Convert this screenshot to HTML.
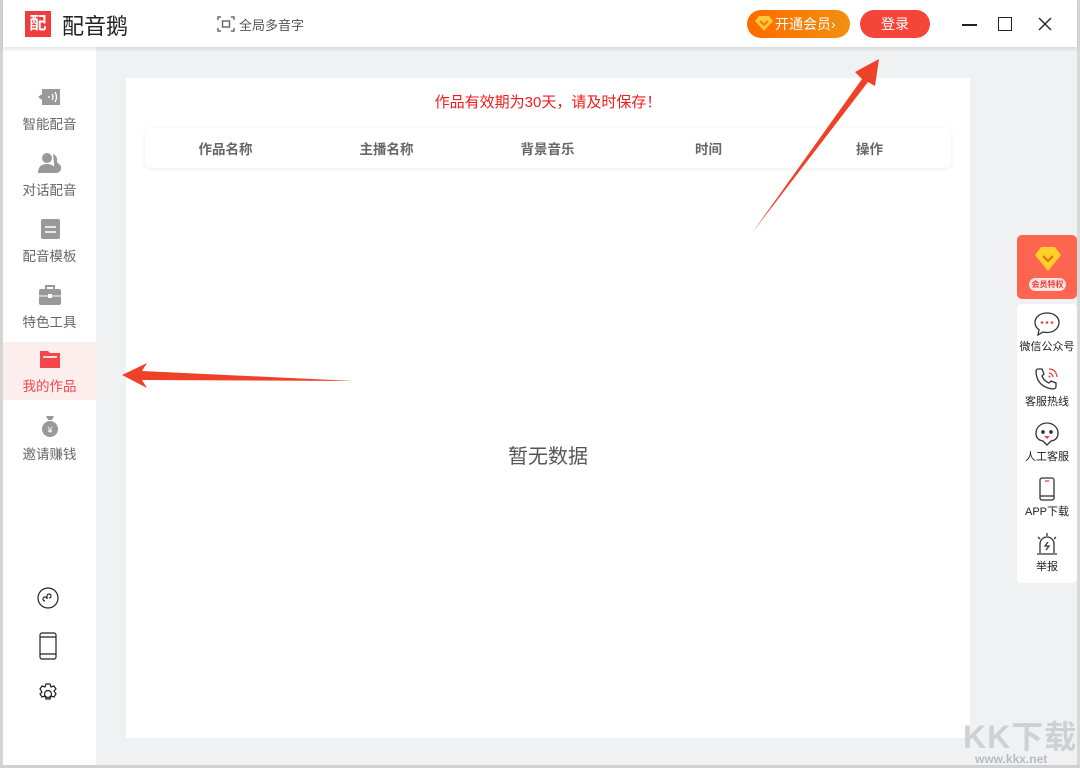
<!DOCTYPE html>
<html><head><meta charset="utf-8"><style>
*{margin:0;padding:0;box-sizing:border-box}
body{width:1080px;height:768px;overflow:hidden;background:#f0f1f3;font-family:"Liberation Sans","Noto Sans CJK SC",sans-serif;position:relative}
.abs{position:absolute}
.lb{left:0;top:0;width:3px;height:768px;background:#d4d4d4}
.rb{left:1077px;top:0;width:3px;height:768px;background:#d8d8d8}
.bb{left:0;top:765px;width:1080px;height:3px;background:#d0d0d0}
.title{left:3px;top:0;width:1074px;height:47px;background:#fff;box-shadow:0 2px 4px rgba(0,0,0,.12);z-index:2}
.side{left:3px;top:47px;width:93px;height:718px;background:#fff}
.nav{position:absolute;left:0;width:93px;height:58px;text-align:center;font-size:13.5px;color:#666}
.nav svg{display:block;margin:0 auto 6px}
.panel{left:126px;top:78px;width:844px;height:660px;background:#fff}
.th{position:absolute;left:19px;top:50px;width:806px;height:40px;border-radius:6px;box-shadow:0 1px 5px rgba(0,0,0,.08);background:#fff;font-size:13.5px;font-weight:bold;color:#666}
.th span{position:absolute;top:10px;width:161px;text-align:center}
.rp{left:1017px;top:304px;width:60px;height:279px;background:#fff;border-radius:5px}
.ri{position:absolute;left:0;width:60px;text-align:center;font-size:11px;color:#222}
.ri svg{display:block;margin:0 auto 2px}
</style></head><body>
<div class="abs lb"></div><div class="abs rb"></div><div class="abs bb"></div>
<div class="abs title">
 <div class="abs" style="left:22px;top:11px;width:26px;height:26px;background:#ef3d3d;color:#fff;font-size:17px;font-weight:bold;text-align:center;line-height:26px">配</div>
 <div class="abs" style="left:59px;top:9px;font-size:22px;color:#222">配音鹅</div>
 <svg class="abs" style="left:214px;top:15px" width="18" height="18" viewBox="0 0 18 18" fill="none" stroke="#666" stroke-width="1.4"><path d="M1 5V2h3M14 2h3v3M17 13v3h-3M4 16H1v-3"/><rect x="5.5" y="6" width="7" height="6"/></svg>
 <div class="abs" style="left:236px;top:15px;font-size:13px;color:#555">全局多音字</div>
 <div class="abs" style="left:744px;top:10px;width:103px;height:28px;border-radius:14px;background:linear-gradient(90deg,#ff6a00,#f09010);color:#fff;font-size:14px;line-height:28px;padding-left:28px">开通会员›</div>
 <svg class="abs" style="left:752px;top:15px" width="18" height="17" viewBox="0 0 18 17"><path d="M4 1h10l4 5-9 10L0 6z" fill="#ffc83a"/><path d="M5 6l4 4 4-4" stroke="#ff7a00" stroke-width="2" fill="none"/></svg>
 <div class="abs" style="left:857px;top:10px;width:70px;height:28px;border-radius:14px;background:#f5453b;color:#fff;font-size:14px;line-height:28px;text-align:center">登录</div>
 <div class="abs" style="left:959px;top:24px;width:15px;height:1.5px;background:#222"></div>
 <div class="abs" style="left:995px;top:17px;width:14px;height:14px;border:1.5px solid #222"></div>
 <svg class="abs" style="left:1035px;top:17px" width="14" height="14"><path d="M1 1l12 12M13 1L1 13" stroke="#222" stroke-width="1.4"/></svg>
</div>
<div class="abs side">
 <div class="nav" style="top:40px"><svg width="24" height="20" viewBox="0 0 24 20"><path d="M4 2h18v16H4V13L0 10l4-3z" fill="#999"/><path d="M10 10h2M14 7q2 3 0 6M17 5q3 5 0 10" stroke="#fff" stroke-width="1.3" fill="none"/></svg>智能配音</div>
 <div class="nav" style="top:106px"><svg width="24" height="20" viewBox="0 0 24 20"><circle cx="9" cy="5" r="5" fill="#999"/><path d="M0 20q0-9 9-9t9 9z" fill="#999"/><path d="M15 1q5 2 4 8l4 4q1 7-6 7z" fill="#999"/></svg>对话配音</div>
 <div class="nav" style="top:172px"><svg width="24" height="20" viewBox="0 0 24 20"><rect x="3" y="0" width="19" height="20" rx="2" fill="#999"/><path d="M7 8h11M7 13h11" stroke="#fff" stroke-width="1.4"/></svg>配音模板</div>
 <div class="nav" style="top:238px"><svg width="24" height="20" viewBox="0 0 24 20"><path d="M8 4V1h8v3" stroke="#999" stroke-width="2" fill="none"/><rect x="1" y="4" width="22" height="16" rx="2" fill="#999"/><path d="M1 11h22" stroke="#fff"/><rect x="10" y="9" width="4" height="4" fill="#fff"/></svg>特色工具</div>
 <div class="nav" style="top:295px;height:58px;background:#fdeeee;color:#f5454b;padding-top:7px"><svg width="24" height="20" viewBox="0 0 24 20"><path d="M2 2h8l2 2h10v15H2z" fill="#f5454b"/><path d="M5 8h14" stroke="#fff" stroke-width="1.6"/></svg>我的作品</div>
 <div class="nav" style="top:368px"><svg width="24" height="22" viewBox="0 0 24 22"><path d="M8 1h8l-2 4h-4z" fill="#999"/><circle cx="12" cy="14" r="8" fill="#999"/><text x="12" y="18" font-size="9" fill="#fff" text-anchor="middle">¥</text></svg>邀请赚钱</div>
 <svg class="abs" style="left:34px;top:540px" width="22" height="22" viewBox="0 0 22 22" fill="none" stroke="#222" stroke-width="1.2"><circle cx="11" cy="11" r="10"/><path d="M8 14a2 2 0 1 1 2-2v-3a2 2 0 1 1 2 2"/></svg>
 <svg class="abs" style="left:36px;top:585px" width="18" height="28" viewBox="0 0 18 28" fill="none" stroke="#222" stroke-width="1.2"><rect x="1" y="1" width="16" height="26" rx="2"/><path d="M1 5h16M1 22h16"/></svg>
 <svg class="abs" style="left:33px;top:635px" width="24" height="24" viewBox="0 0 24 24" fill="none" stroke="#222" stroke-width="1.2"><path d="M10 2h4l1 3 3-1 2 3-2 2 2 3-2 3-3-1-1 3h-4l-1-3-3 1-2-3 2-2-2-3 2-3 3 1z"/><circle cx="12" cy="12" r="3.5"/></svg>
</div>
<div class="abs panel">
 <div class="abs" style="left:0;width:844px;top:13px;text-align:center;font-size:15px;color:#f21a1a">作品有效期为30天，请及时保存！</div>
 <div class="th"><span style="left:0">作品名称</span><span style="left:161px">主播名称</span><span style="left:322px">背景音乐</span><span style="left:483px">时间</span><span style="left:644px">操作</span></div>
 <div class="abs" style="left:0;width:844px;top:362px;text-align:center;font-size:20px;color:#555">暂无数据</div>
</div>
<div class="abs" style="left:1017px;top:235px;width:60px;height:64px;background:#fe6550;border-radius:5px">
 <svg class="abs" style="left:17px;top:11px" width="28" height="26" viewBox="0 0 28 26"><path d="M7 1h14l6 8-13 16L1 9z" fill="#ffd02a"/><path d="M9 10l5 5 5-5" stroke="#f26b10" stroke-width="2.2" fill="none"/></svg>
 <div class="abs" style="left:12px;top:43px;width:37px;height:13px;border-radius:7px;background:#fde3df;color:#f04040;font-size:8px;text-align:center;line-height:13px;font-weight:bold">会员特权</div>
</div>
<div class="abs rp">
 <div class="ri" style="top:8px"><svg width="26" height="24" viewBox="0 0 26 24" fill="none" stroke="#333" stroke-width="1.3"><path d="M13 1C6 1 1 5 1 10.5c0 3 1.6 5.5 4 7.2L4 23l5-3q2 .5 4 .5c7 0 12-4.5 12-10S20 1 13 1z"/><circle cx="8" cy="10.5" r="1.3" fill="#f04040" stroke="none"/><circle cx="13" cy="10.5" r="1.3" fill="#f04040" stroke="none"/><circle cx="18" cy="10.5" r="1.3" fill="#f04040" stroke="none"/></svg>微信公众号</div>
 <div class="ri" style="top:63px"><svg width="26" height="24" viewBox="0 0 26 24" fill="none" stroke="#333" stroke-width="1.3"><path d="M4 2l4 0 2 5-2 2q2 5 7 7l2-2 5 2v4q-1 2-3 2Q3 20 2 5q0-3 2-3z"/><path d="M15 6q3 0 4 4M15 2q7 0 8 8" stroke="#f04040"/><circle cx="15.5" cy="9.5" r="1" fill="#f04040" stroke="none"/></svg>客服热线</div>
 <div class="ri" style="top:118px"><svg width="26" height="24" viewBox="0 0 26 24" fill="none" stroke="#333" stroke-width="1.3"><path d="M13 23l-4-4Q2 18 2 11a11 10 0 0 1 22 0q0 7-7 8z"/><circle cx="9" cy="10" r="1.2" fill="#333"/><circle cx="17" cy="10" r="1.2" fill="#333"/><path d="M10 14h6l-3 3z" fill="#f04040" stroke="none"/></svg>人工客服</div>
 <div class="ri" style="top:173px"><svg width="26" height="24" viewBox="0 0 26 24" fill="none" stroke="#333" stroke-width="1.3"><rect x="6" y="1" width="14" height="22" rx="2"/><path d="M6 19h14"/><path d="M11 4h4" stroke="#f04040"/></svg>APP下载</div>
 <div class="ri" style="top:228px"><svg width="26" height="24" viewBox="0 0 26 24" fill="none" stroke="#333" stroke-width="1.3"><path d="M6 21V12a7 7 0 0 1 14 0v9M3 22h20M13 1v3M4 5l2 2M22 5l-2 2"/><path d="M14 10l-3 4h4l-3 4" stroke="#333"/></svg>举报</div>
</div>
<svg class="abs" style="left:0;top:0;z-index:5" width="1080" height="768">
 <path d="M752 233L862 79 855 72 879 59 875 86 868 82Z" fill="#ee4228"/>
 <path d="M122 375L147 363 142 371 354 381 142 380 147 388Z" fill="#ee4228"/>
</svg>
<div class="abs" style="left:963px;top:712px;font-size:32px;font-weight:bold;color:#c8c8c8;letter-spacing:1px;opacity:.8">KK下载</div>
<div class="abs" style="left:975px;top:752px;font-size:12px;font-weight:bold;color:#bbb">www.kkx.net</div>
</body></html>
